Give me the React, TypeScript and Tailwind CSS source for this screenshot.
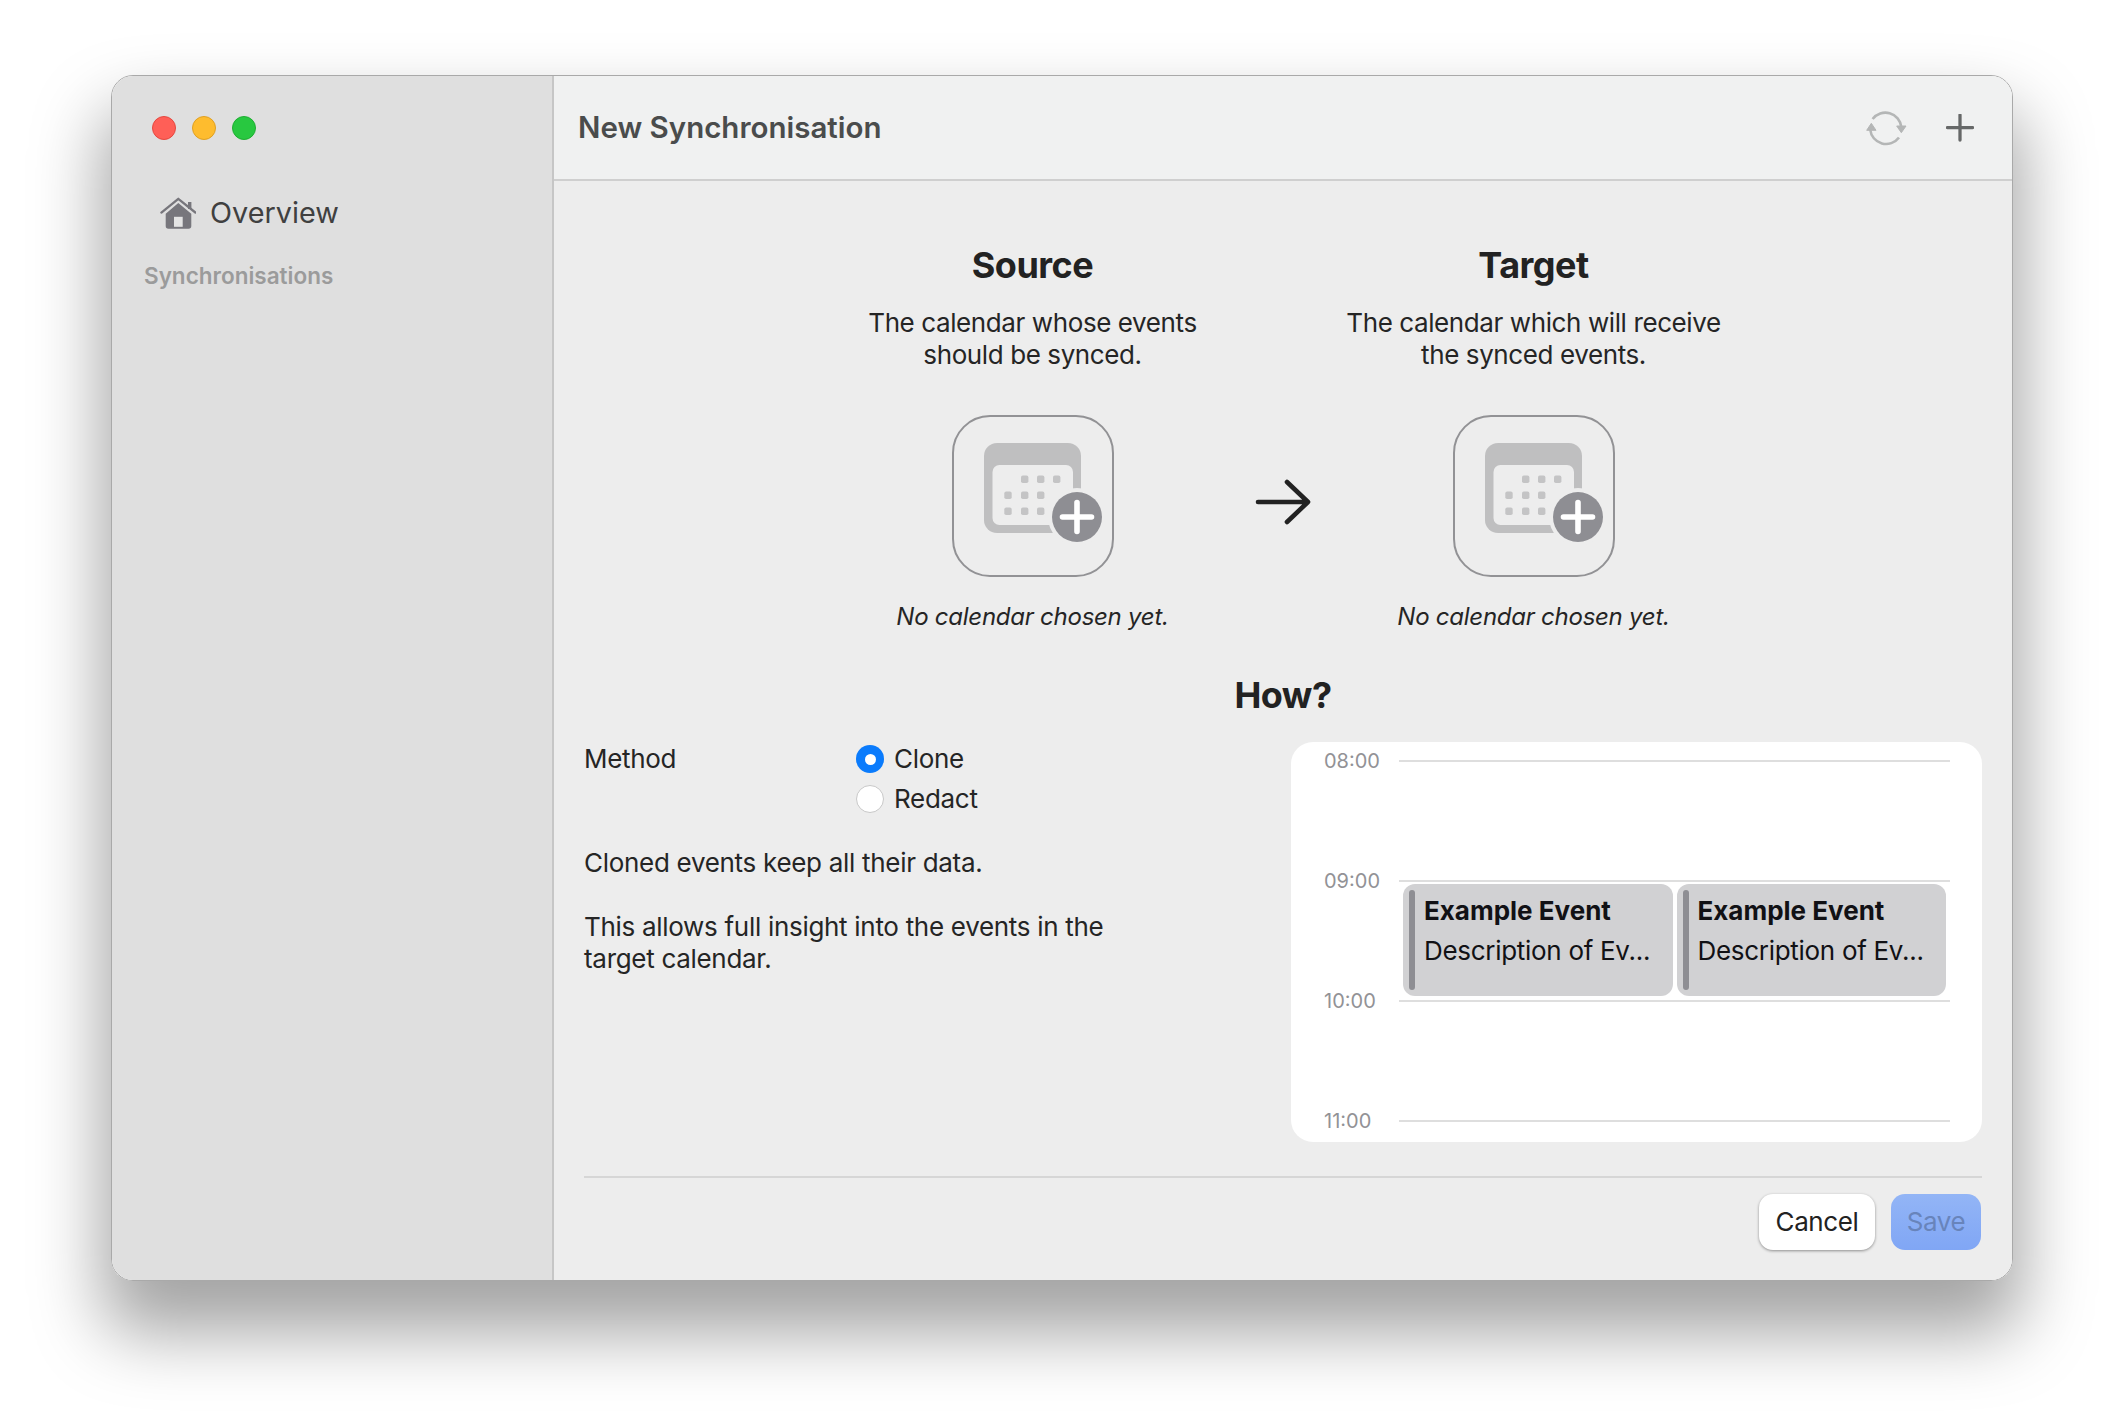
import React from 'react';

const HomeIcon = () => (
  <svg width="36" height="32" viewBox="0 0 36 32" fill="none">
    <path d="M1.4 15.6 18.3 1.8 35.4 15.6" stroke="#77767c" strokeWidth="2.3" strokeLinecap="round" strokeLinejoin="round" />
    <rect x="28" y="5" width="3.4" height="7" fill="#77767c" />
    <path d="M18.3 6 31.3 16.8V29a2.7 2.7 0 0 1-2.7 2.7H8.4A2.7 2.7 0 0 1 5.7 29V16.8Z" fill="#77767c" />
    <rect x="14" y="19.8" width="8.7" height="10" fill="#e4e4e4" />
  </svg>
);

const SyncIcon = () => (
  <svg width="44" height="44" viewBox="0 0 44 44" fill="none">
    <path d="M8.6 13A16 16 0 0 1 37.3 21" stroke="#b4b6b6" strokeWidth="2.6" />
    <path d="M35 31.5A16 16 0 0 1 6.2 23.5" stroke="#b4b6b6" strokeWidth="2.6" />
    <path d="M32.7 20H42L37.3 26.7Z" fill="#b4b6b6" stroke="#b4b6b6" strokeLinejoin="round" />
    <path d="M2.7 24.3H12L7.3 17.3Z" fill="#b4b6b6" stroke="#b4b6b6" strokeLinejoin="round" />
  </svg>
);

const PlusIcon = () => (
  <svg width="28" height="28" viewBox="0 0 28 29" fill="none">
    <path d="M14 1V27M1 14H27" stroke="#666868" strokeWidth="3.4" strokeLinecap="round" />
  </svg>
);

const ArrowIcon = () => (
  <svg width="56" height="46" viewBox="0 0 56 46" fill="none">
    <path d="M3 23H52M32 3 53 23 32 43" stroke="#222222" strokeWidth="4.6" strokeLinecap="round" strokeLinejoin="round" />
  </svg>
);

// dot positions in the calendar glyph, box coordinates
const dots = [
  [71.7, 64.3], [87.7, 64.3], [103.7, 64.3],
  [55, 80.3], [71.7, 80.3], [87.7, 80.3],
  [55, 96.3], [71.7, 96.3], [87.7, 96.3],
];

const CalendarPicker = () => (
  <div className="w-[162px] h-[162px] rounded-[38px] border-2 border-[#929295]">
    <svg width="158" height="158" viewBox="1 2 158 158" fill="none">
      <rect x="31" y="28" width="97" height="90" rx="13" fill="#bfbfc0" />
      <rect x="39.5" y="50" width="80.5" height="60" rx="7" fill="#ededed" />
      {dots.map(([x, y], i) => (
        <rect key={i} x={x - 3.7} y={y - 3.7} width="7.4" height="7.4" rx="1.8" fill="#c4c4c5" />
      ))}
      <circle cx="124" cy="102" r="29" fill="#ededed" />
      <circle cx="124" cy="102" r="25" fill="#8e8e93" />
      <path d="M109.5 102H138.5M124 87.5V116.5" stroke="#ffffff" strokeWidth="5.6" strokeLinecap="round" />
    </svg>
  </div>
);

const CalendarColumn = ({ title, lines }: { title: string; lines: string[] }) => (
  <div className="w-[420px] flex flex-col items-center text-center">
    <h2 className="text-[36px] leading-[44px] font-bold text-[#222222] tracking-[-0.5px]">{title}</h2>
    <p className="mt-5 text-[26px] leading-[32px] tracking-[-0.4px]">
      {lines[0]}
      <br />
      {lines[1]}
    </p>
    <div className="mt-11">
      <CalendarPicker />
    </div>
    <p className="mt-6 text-[24px] leading-[32px] italic tracking-[-0.25px]">No calendar chosen yet.</p>
  </div>
);

const ExampleEvent = () => (
  <div className="flex-1 flex bg-[#d1d1d3] rounded-[12px] py-[6px] pl-[6px]">
    <div className="w-[6px] rounded-full bg-[#8e8e93]" />
    <div className="ml-[9px] mt-[1px] text-[26px] text-[#111115] whitespace-nowrap">
      <div className="font-bold leading-[40px]">Example Event</div>
      <div className="leading-[39px] tracking-[-0.3px]">Description of Ev...</div>
    </div>
  </div>
);

const hours = ['08:00', '09:00', '10:00', '11:00'];

const DayPreview = () => (
  <div className="relative w-[691px] h-[400px] bg-white rounded-[22px] pt-[5px] pl-[33px] pr-[32px] flex flex-col gap-[92px]">
    {hours.map((hour) => (
      <div key={hour} className="h-[28px] flex items-center">
        <span className="w-[75px] text-[20px] text-[#929296]">{hour}</span>
        <div className="flex-1 h-[2px] bg-[#dedede]" />
      </div>
    ))}
    <div className="absolute left-[112px] top-[142px] w-[543px] h-[112px] flex gap-[4px]">
      <ExampleEvent />
      <ExampleEvent />
    </div>
  </div>
);

const Radio = ({ checked, label }: { checked?: boolean; label: string }) => (
  <div className="flex items-center gap-[10px] h-[32px]">
    {checked ? (
      <span className="w-[28px] h-[28px] rounded-full bg-[#0a7bfc] flex items-center justify-center">
        <span className="w-[11px] h-[11px] rounded-full bg-white" />
      </span>
    ) : (
      <span className="w-[28px] h-[28px] rounded-full bg-white border border-[#c8c8c8]" />
    )}
    <span>{label}</span>
  </div>
);

export default function App() {
  return (
    <div className="min-h-[1428px] bg-white pt-[75px] pl-[111px] overflow-hidden font-['Inter',sans-serif] text-[#252525]">
      <div className="w-[1902px] h-[1206px] flex rounded-[22px] overflow-hidden border border-[#a9a9a9] shadow-[0_44px_70px_8px_rgba(0,0,0,0.36)]">
        {/* Sidebar */}
        <aside className="w-[442px] shrink-0 bg-[#dfdfdf] border-r-2 border-[#c6c6c6] pl-[32px] pt-[40px]">
          <div className="flex gap-4 pl-[8px]">
            <span className="w-[24px] h-[24px] rounded-full bg-[#ff5f57] border border-[#e5483f]" />
            <span className="w-[24px] h-[24px] rounded-full bg-[#febc2e] border border-[#dfa023]" />
            <span className="w-[24px] h-[24px] rounded-full bg-[#28c840] border border-[#1fae32]" />
          </div>
          <div className="mt-[53px] pl-[16px] h-[40px] flex items-center gap-[14px] text-[28.8px] text-[#404040]">
            <HomeIcon />
            <span>Overview</span>
          </div>
          <div className="mt-[29px] text-[22.5px] leading-[28px] font-semibold text-[#9b9b9b]">Synchronisations</div>
        </aside>

        {/* Main */}
        <main className="flex-1 bg-[#ededed] flex flex-col">
          <header className="h-[105px] shrink-0 bg-[#f0f1f1] border-b-2 border-[#cfcfcf] pl-[24px] pr-[38px] flex items-center justify-between">
            <h1 className="text-[29.5px] font-semibold text-[#4a4c4c]">New Synchronisation</h1>
            <div className="flex items-center gap-[38px]">
              <SyncIcon />
              <PlusIcon />
            </div>
          </header>

          <div className="px-[30px] pt-[62px] flex flex-col">
            <div className="flex justify-center">
              <CalendarColumn title="Source" lines={['The calendar whose events', 'should be synced.']} />
              <div className="w-[81px] flex justify-center pt-[236px]">
                <ArrowIcon />
              </div>
              <CalendarColumn title="Target" lines={['The calendar which will receive', 'the synced events.']} />
            </div>

            <h2 className="mt-[40px] text-center text-[36px] leading-[44px] font-bold text-[#222222] tracking-[-0.5px]">How?</h2>

            <div className="mt-[25px] flex justify-between">
              <div className="pt-px text-[26px] leading-[32px] tracking-[-0.3px]">
                <div className="flex">
                  <div className="w-[272px]">Method</div>
                  <div className="flex flex-col gap-2">
                    <Radio checked label="Clone" />
                    <Radio label="Redact" />
                  </div>
                </div>
                <p className="mt-8">Cloned events keep all their data.</p>
                <p className="mt-8 w-[560px]">This allows full insight into the events in the target calendar.</p>
              </div>
              <DayPreview />
            </div>

            <div className="mt-[34px] h-[2px] bg-[#d6d6d6]" />

            <div className="mt-4 mr-px flex justify-end gap-4 text-[26px] tracking-[-0.4px]">
              <button className="w-[116px] h-[56px] pb-[2px] rounded-[14px] bg-white text-[#222222] shadow-[0_1px_3px_rgba(0,0,0,0.4)]">Cancel</button>
              <button className="w-[90px] h-[56px] pb-[2px] rounded-[14px] bg-gradient-to-b from-[#93b5f6] to-[#80a6f5] text-[#6884bb]">Save</button>
            </div>
          </div>
        </main>
      </div>
    </div>
  );
}
